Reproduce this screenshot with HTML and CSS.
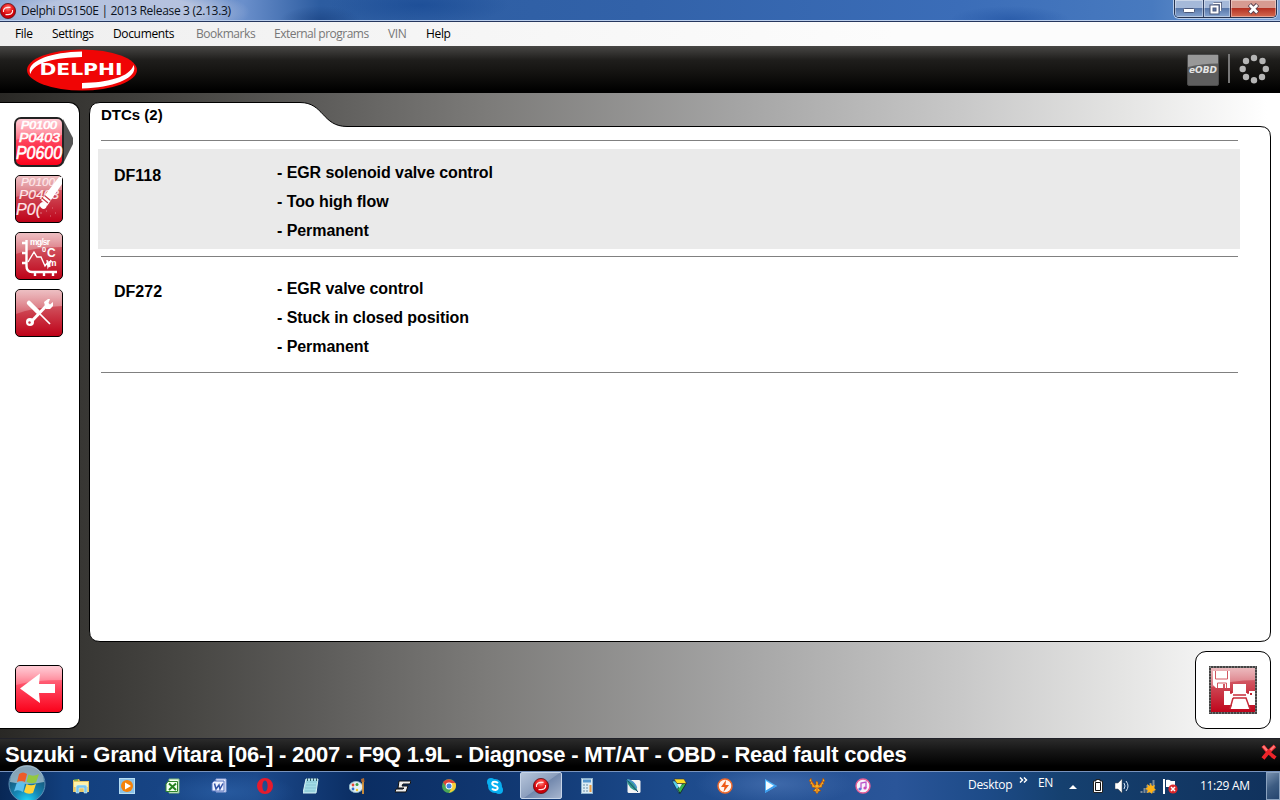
FILE: index.html
```html
<!DOCTYPE html>
<html lang="en">
<head>
<meta charset="utf-8">
<title>Delphi DS150E | 2013 Release 3 (2.13.3)</title>
<link rel="stylesheet" href="styles.css">
</head>
<body>
<svg class="defs" width="0" height="0" aria-hidden="true">
  <defs>
    <linearGradient id="bright" x2="0" y2="1"><stop offset="0" stop-color="#ff9aac"/><stop offset=".5" stop-color="#ff4059"/><stop offset="1" stop-color="#fa0019"/></linearGradient>
    <linearGradient id="dull" x2="0" y2="1"><stop offset="0" stop-color="#dc8087"/><stop offset=".5" stop-color="#cc3e4c"/><stop offset="1" stop-color="#be0017"/></linearGradient>
    <linearGradient id="gloss" x2="0" y2="1"><stop offset="0" stop-color="#fff" stop-opacity=".5"/><stop offset="1" stop-color="#fff" stop-opacity=".2"/></linearGradient>
    <radialGradient id="ball" cx=".5" cy=".3"><stop offset="0" stop-color="#ff8a85"/><stop offset=".5" stop-color="#f02a28"/><stop offset="1" stop-color="#c8000a"/></radialGradient>
    <symbol id="delphi-ball" viewBox="0 0 16 16"><circle cx="8" cy="8" r="7.6" fill="url(#ball)" stroke="#5d1015" stroke-width=".8"/><path d="M3.500 9V7Q4.500 4.500 8 4.400H10.500M12.500 7V9Q11.500 11.500 8 11.600H5.500" fill="none" stroke="#ffe9e8" stroke-width="1.100"/></symbol>
  </defs>
</svg>
<div class="screen">
  <header class="titlebar">
    <svg class="title-icon" viewBox="0 0 16 16"><use href="#delphi-ball"/></svg>
    <span class="title">Delphi DS150E | 2013 Release 3 (2.13.3)</span>
    <div class="window-buttons">
      <span class="wb wb-min"><svg width="12" height="6"><rect x=".5" y=".5" width="11" height="4" rx="1" fill="#fff" stroke="#4b587a"/></svg></span>
      <span class="wb wb-max"><svg width="13" height="13"><path d="M4.500 1.500H11.500V8.500" fill="none" stroke="#4b587a" stroke-width="3"/><path d="M4 1.500H11.500V9" fill="none" stroke="#fff" stroke-width="1.300"/><rect x="2.500" y="4.500" width="6" height="6" fill="#5b75a4" stroke="#4b587a" stroke-width="4"/><rect x="2.500" y="4.500" width="6" height="6" fill="none" stroke="#fff" stroke-width="2"/></svg></span>
      <span class="wb wb-close"><svg width="13" height="12"><path d="M2.500 1.500L10.500 10M10.500 1.500L2.500 10" stroke="#5b4452" stroke-width="4.600"/><path d="M2.800 2L10.200 9.500M10.200 2L2.800 9.500" stroke="#fff" stroke-width="2.700"/></svg></span>
    </div>
  </header>

  <nav class="menubar">
    <span class="m-file">File</span><span class="m-settings">Settings</span><span class="m-docs">Documents</span><span class="m-book off">Bookmarks</span><span class="m-ext off">External programs</span><span class="m-vin off">VIN</span><span>Help</span>
  </nav>

  <div class="brandbar">
    <svg class="logo" width="112" height="42" viewBox="0 0 112 42">
      <ellipse cx="56" cy="21" rx="55" ry="20.500" fill="#f00505"/>
      <path d="M56 2.600V8C30 8.500 8 13 4.500 25C-1 14 21 3.300 56 2.600Z" fill="#fff"/>
      <path d="M56 39.400V34C82 33.500 104 28 107.500 16C113 27 91 38.700 56 39.400Z" fill="#fff"/>
      <text x="13.500" y="25.800" textLength="83" lengthAdjust="spacingAndGlyphs">DELPHI</text>
    </svg>
    <div class="brand-tools">
      <svg width="32" height="32" viewBox="0 0 32 32">
        <rect x=".5" y=".5" width="31" height="31" rx="1.500" fill="#5e5e5e" stroke="#4a4a4a"/>
        <path d="M1 1H31V9.500Q14 9.500 1 13Z" fill="#989898"/>
        <text class="eobd" x="2" y="19" textLength="28" lengthAdjust="spacingAndGlyphs">eOBD</text>
      </svg>
      <span class="divider"></span>
      <svg width="30" height="30" viewBox="0 0 30 30" fill="#b5b5b5"><circle cx="15" cy="4" r="3.200"/><circle cx="23.500" cy="7" r="3.200"/><circle cx="26.800" cy="15" r="3.200"/><circle cx="23" cy="23" r="3.200"/><circle cx="15" cy="26.200" r="3.200"/><circle cx="7" cy="23" r="3.200"/><circle cx="3.700" cy="15" r="3.200"/><circle cx="7" cy="7" r="3.200"/></svg>
    </div>
  </div>

  <main class="workspace">
    <aside class="sidebar">
      <div class="tools">
        <svg width="60" height="50" viewBox="0 0 60 50">
          <path d="M49 2L59 21V27L49 47Z" fill="#555"/>
          <rect x="1" y="1" width="48" height="48" rx="6" fill="url(#bright)" stroke="#222" stroke-width="2"/>
          <path d="M2 7Q2 2 7 2H43Q48 2 48 7V18Q20 16 2 23Z" fill="url(#gloss)"/>
          <g class="codes"><text x="7" y="12" font-size="10" textLength="36" lengthAdjust="spacingAndGlyphs">P0100</text><text x="5" y="25" font-size="13" textLength="41" lengthAdjust="spacingAndGlyphs">P0403</text><text x="2" y="42" font-size="18" textLength="46" lengthAdjust="spacingAndGlyphs">P0600</text></g>
        </svg>
        <svg width="50" height="48" viewBox="0 0 50 48">
          <rect x="1.500" y=".5" width="47" height="47" rx="4.500" fill="url(#dull)" stroke="#000"/>
          <path d="M2 5Q2 1 6 1H44Q48 1 48 5V15Q20 15 2 22Z" fill="url(#gloss)"/>
          <g class="codes thin"><text x="7" y="11" font-size="10" textLength="34" lengthAdjust="spacingAndGlyphs">P0100</text><text x="5" y="24" font-size="13" textLength="40" lengthAdjust="spacingAndGlyphs">P0403</text><text x="2" y="40" font-size="17" textLength="25" lengthAdjust="spacingAndGlyphs">P0(</text></g>
          <path d="M27 25L45 2H48V9L33 31Z" fill="#fff"/>
          <path d="M28 23L34 28M30.500 20.500L36.500 25.500" stroke="#c63543" stroke-width="1.200"/><path d="M26 29Q28 25 33 29Q33 34 29 34Q25 32 26 29Z" fill="#fff"/>
          <path d="M26 38H28M32 36H33M38 33H39M41 38H42M36 41H37M25 42H26" stroke="#de7782"/>
        </svg>
        <svg width="50" height="48" viewBox="0 0 50 48">
          <rect x="1.500" y=".5" width="47" height="47" rx="4.500" fill="url(#dull)" stroke="#000"/>
          <path d="M2 5Q2 1 6 1H44Q48 1 48 5V15Q20 15 2 22Z" fill="url(#gloss)"/>
          <path d="M12.500 8V34Q12.500 40 18 40H43M8 11H13M8 21H13M8 31H13M21 41V44M30 41V44M39 41V44" fill="none" stroke="#fff" stroke-width="2.400"/>
          <path d="M14 30L20 20L23 25H27L31 34L34 30L36 35M33 28L34 35L37 28" fill="none" stroke="#fff" stroke-width="1.400"/>
          <g class="units"><text x="16" y="12.500" font-size="8.500" textLength="20">mg/sr</text><text x="28" y="20" font-size="7.500">0</text><text x="33" y="25" font-size="12">C</text><text x="34.500" y="34" font-size="9">m</text></g>
        </svg>
        <svg width="50" height="48" viewBox="0 0 50 48">
          <rect x="1.500" y=".5" width="47" height="47" rx="4.500" fill="url(#dull)" stroke="#000"/>
          <path d="M2 5Q2 1 6 1H44Q48 1 48 5V17Q20 18 2 25Z" fill="url(#gloss)"/>
          <path d="M15 14L24 23" stroke="#fff" stroke-width="4.500" stroke-linecap="round"/><path d="M23 22L36 35" stroke="#fff" stroke-width="1.700"/><path d="M16 34L34 15" stroke="#fff" stroke-width="3"/>
          <circle cx="16" cy="33" r="4" fill="#fff"/><circle cx="15.500" cy="33.500" r="1.200" fill="#ca3543"/><path d="M31 17L30 13L34 10H36L34.500 14L36 15.500L39 13V17L36 20H32Z" fill="#fff"/>
        </svg>
      </div>
      <svg width="50" height="48" viewBox="0 0 50 48">
        <rect x="1.500" y=".5" width="47" height="47" rx="4.500" fill="url(#bright)" stroke="#000"/>
        <path d="M2 5Q2 1 6 1H44Q48 1 48 5V15Q20 15 2 20Z" fill="url(#gloss)"/>
        <path d="M6 23.500L26 8.500L25 19H41V28H25L26 38Z" fill="#fff"/>
      </svg>
    </aside>
    <section class="content">
      <div class="panel">
        <svg class="panel-shape" width="1182" height="541" viewBox="0 0 1182 541"><path d="M.5 12Q.5 .5 11 .5H211C235 .5 233 24.500 258 24.500H1171Q1181.500 24.500 1181.500 35V530Q1181.500 539.500 1171 539.500H11Q.5 539.500 .5 529Z" fill="#fff" stroke="#000"/></svg>
        <h1>DTCs (2)</h1>
        <div class="faults">
          <article class="fault selected"><b>DF118</b><ul><li>- EGR solenoid valve control</li><li>- Too high flow</li><li>- Permanent</li></ul></article>
          <article class="fault"><b>DF272</b><ul><li>- EGR valve control</li><li>- Stuck in closed position</li><li>- Permanent</li></ul></article>
        </div>
      </div>
      <div class="print-box">
        <svg width="48" height="48" viewBox="0 0 48 48">
          <rect width="48" height="48" fill="url(#dull)"/><path d="M0 0H48V14Q20 14 0 22Z" fill="url(#gloss)"/>
          <rect x="1" y="1" width="46" height="46" fill="none" stroke="#444" stroke-width="2"/><rect x="1" y="1" width="46" height="46" fill="none" stroke="#aaa" stroke-width="1" stroke-dasharray="1 2"/>
          <path d="M4 5H21V22H7L4 19Z" fill="#fff"/><path d="M6.500 5V13H18.500V5M8.500 22V17H17.500V22" fill="none" stroke="#d35661"/><rect x="14" y="18" width="2" height="4" fill="#d35661"/>
          <path d="M24 18H37V27H40V25H46V39H39L41 43H21L23 39H15V25H21V27H24Z" fill="#fff"/><path d="M24 29H37M22 25V28M39 25V28M24 32H37L41 43M24 32L21 43" stroke="#c62c3a" fill="none" stroke-width="1.500"/><rect x="41" y="27" width="2" height="2" fill="#c0222f"/>
        </svg>
      </div>
    </section>
  </main>

  <div class="status"><span>Suzuki - Grand Vitara [06-] - 2007 - F9Q 1.9L - Diagnose - MT/AT - OBD - Read fault codes</span>
    <svg width="16" height="16" viewBox="0 0 16 16"><path d="M2 2Q6 8 14.500 14M14 2Q7 8 2 14.500" fill="none" stroke="#ed2429" stroke-width="3.800"/><path d="M2 2L6 6.500M13.500 2L9.500 6" stroke="#ff7a7a" stroke-width="2.200"/></svg></div>

  <footer class="taskbar">
    <svg class="start" width="38" height="38" viewBox="0 0 38 38">
      <defs><radialGradient id="orb" cx=".5" cy="1" r=".9"><stop offset="0" stop-color="#20dcff"/><stop offset=".4" stop-color="#168ab8"/><stop offset="1" stop-color="#174566"/></radialGradient></defs>
      <circle cx="19" cy="19" r="18" fill="url(#orb)" stroke="#5d8fb5"/><path d="M2 17A17 17 0 0136 17Q19 21 2 17Z" fill="#d1e1e9" opacity=".6"/>
      <path d="M11 9Q15 6 19 9L17 17Q13 15 9 17Z" fill="#ee5b29"/><path d="M20.500 9.500Q25 12 31 9L28 17.500Q23 19 18.500 17Z" fill="#94c841"/><path d="M8.500 18.500Q13 16 17 18.500L15 27Q10 24 6 26.500Z" fill="#5fc0ee"/><path d="M18.500 19Q23 21.500 28 19L25 28Q20 30 16 27Z" fill="#ffd33b"/>
    </svg>
    <div class="apps">
      <span><svg viewBox="0 0 16 16"><path d="M0 2L6 1L7 3H16V14H0Z" fill="#e7c765"/><path d="M1 4H15V9H1Z" fill="#fff2a6"/><path d="M3 15V9Q3 7 5 7H12Q14 7 14 9V15H11V10H6V15Z" fill="#7bc8ed" stroke="#e1f5ff" stroke-width=".5"/><path d="M1 2H5" stroke="#3ca745"/></svg></span>
      <span><svg viewBox="0 0 16 16"><rect x=".5" y=".5" width="15" height="15" fill="#8bc2e8" stroke="#b8def4"/><circle cx="8" cy="8" r="6" fill="#f58209"/><path d="M6 4.500L12 8L6 11.500Z" fill="#fff"/></svg></span>
      <span><svg viewBox="0 0 16 16"><path d="M4 1H14V15H4Z" fill="#f7fff5" stroke="#80bd7b"/><path d="M3 3.500H12.500V13.500H1V6Z" fill="#f3fff0" stroke="#31872d"/><path d="M4 5.500L11 12M11 5.500L4 12" stroke="#258020" stroke-width="2"/></svg></span>
      <span><svg viewBox="0 0 16 16"><path d="M5 1H15V14H5Z" fill="#eef3ff" stroke="#9aaade"/><path d="M3 3H13V13H1V5Z" fill="#eff3ff" stroke="#5370bd"/><path d="M3.500 5.500L5 11L8 7L9 11L12 5.500" fill="none" stroke="#3455a8" stroke-width="1.500"/></svg></span>
      <span><svg viewBox="0 0 16 16"><path fill-rule="evenodd" d="M8 0A8 8 0 108 16A8 8 0 008 0ZM8 2.500C11.500 2.500 11.500 13.500 8 13.500S4.500 2.500 8 2.500Z" fill="#e61b2d"/></svg></span>
      <span><svg viewBox="0 0 16 16"><path d="M3 1H15L13 15H0Z" fill="#a2dbe5" stroke="#d3eff2"/><path d="M3 4H14M3 7H13M2 10H13M2 13H12" stroke="#7fbccb" stroke-width=".7"/><path d="M4.500 0V3M7.500 0V3M10.500 0V3M13.500 0V3" stroke="#325b68"/></svg></span>
      <span><svg viewBox="0 0 16 16"><ellipse cx="7" cy="9" rx="6.800" ry="5.500" fill="#e3f1f5" stroke="#8eb6c8"/><circle cx="4" cy="7" r="1.400" fill="#e74637"/><circle cx="8" cy="6.500" r="1.500" fill="#3f9b43"/><circle cx="4" cy="11" r="1.400" fill="#326fcd"/><circle cx="8" cy="12" r="1.200" fill="#f6c828"/><path d="M14 3V16" stroke="#e79a35" stroke-width="1.700"/><path d="M12 1L15 0L15.500 4H12.500Z" fill="#b06a30"/></svg></span>
      <span><svg viewBox="0 0 16 16"><path d="M4 3H16L15 6H8L7 8H13L11 14H0L1 11H8L9 10H3Z" fill="#eee" stroke="#111"/></svg></span>
      <span><svg viewBox="0 0 16 16"><circle cx="8" cy="8" r="7" fill="#4aa657"/><path d="M2 4Q8-2 14.500 5H8L6 10Z" fill="#df4539"/><path d="M8 5H14.500Q17 12 8 15L11 9Z" fill="#f9cf36"/><circle cx="8" cy="8" r="3.400" fill="#fff"/><circle cx="8" cy="8" r="2.500" fill="#4285e4"/></svg></span>
      <span><svg viewBox="0 0 16 16"><circle cx="8" cy="8" r="7" fill="#08aff0"/><circle cx="4" cy="4" r="4" fill="#08aff0"/><circle cx="12" cy="12" r="4" fill="#08aff0"/><path d="M11 5Q9 3 6 4Q4 6 7 7.500L10 8.500Q12 11 8.500 12Q6 12 5 10.500" fill="none" stroke="#fff" stroke-width="2"/></svg></span>
      <span class="active"><svg viewBox="0 0 16 16"><use href="#delphi-ball"/></svg></span>
      <span><svg viewBox="0 0 16 16"><rect x="2.500" y=".5" width="11" height="15" fill="#dcecf5" stroke="#8db1cc"/><path d="M4 3H12" stroke="#5899cf" stroke-width="3"/><path d="M4 7H6M7 7H9M4 10H6M7 10H9M4 13H6M7 13H9" stroke="#6c91aa"/><path d="M11.500 7V14" stroke="#ea9a40" stroke-width="2"/></svg></span>
      <span><svg viewBox="0 0 16 16"><rect x="2.500" y="2" width="13" height="13" rx="1.500" fill="#f4f4f4"/><path d="M1 1Q10 1 12.500 13Q4 12 1 1Z" fill="#319c8b"/><path d="M1 1L13 14" stroke="#174371"/><path d="M2.500 1.800Q9.500 3.500 11.500 10" stroke="#4b94d0" fill="none" stroke-width="1.500"/></svg></span>
      <span><svg viewBox="0 0 16 16"><path d="M1 3L8 15.500L9.500 10.500L5 3Z" fill="#58cce9" stroke="#123" stroke-width=".6"/><path d="M15.500 5L9 15.500L6.500 11L11 6Z" fill="#37b54e" stroke="#111" stroke-width=".7"/><path d="M3 1H13L15.500 5.500H6Z" fill="#ffdf28" stroke="#333" stroke-width=".6"/><path d="M6 6H11L8.500 10Z" fill="#e8f4f4"/></svg></span>
      <span><svg viewBox="0 0 16 16"><circle cx="8" cy="8" r="7" fill="#fff3ed" stroke="#ed682c" stroke-width="1.500"/><path d="M9 2L4 9H7.500L6.500 14L12 7H8.500Z" fill="#ee5a17"/></svg></span>
      <span><svg viewBox="0 0 16 16"><path d="M2 1L14 8L2 15Z" fill="#51b7fa"/><path d="M3 3L11 8L3 13Z" fill="#f4fcff"/><path d="M2 15L14 8L12 7L2 13Z" fill="#3c9bec"/></svg></span>
      <span><svg viewBox="0 0 16 16"><path d="M2 0L0 3L2 4L1 6L3 6.500L3 9L7 10L4 13L6 13L8 16L10 13L12 13L9 10L13 9L13 6.500L15 6L14 4L16 3L14 0L13 4L10 7H9V4L7 3L7 7H6L3 4Z" fill="#f4b324" stroke="#a3460b" stroke-width=".6"/><path d="M2.500 3L6 8.500M13.500 3L10 8.500M8 9V14" fill="none" stroke="#d4540e"/></svg></span>
      <span><svg viewBox="0 0 16 16"><circle cx="8" cy="8" r="7" fill="#f7f4fb" stroke="#e85f96" stroke-width="1.400"/><path d="M6 11V5L11 4V10" fill="none" stroke="#bb56c9" stroke-width="1.300"/><circle cx="5" cy="11" r="1.600" fill="#6378df"/><circle cx="10" cy="10" r="1.600" fill="#ca4bbb"/></svg></span>
    </div>
    <div class="tray">
      <span class="desktop">Desktop</span><svg width="9" height="6" viewBox="0 0 9 6" class="chevron"><path d="M1 .5L3.500 3L1 5.500M5 .5L7.500 3L5 5.500" fill="none" stroke="#fff" stroke-width="1.500"/></svg><span class="lang">EN</span>
      <svg width="8" height="5" class="caret"><path d="M0 4L4 0L8 4Z" fill="#fff"/></svg>
      <svg width="10" height="14" viewBox="0 0 10 14"><path d="M3 .5H7V2H9.500V13.500H.5V2H3Z" fill="#fff" stroke="#222"/><path d="M2.500 3.500H7.500V11.500H2.500Z" fill="#fff" stroke="#111"/></svg>
      <svg width="14" height="14" viewBox="0 0 14 14"><path d="M0 4H3L7 0V14L3 10H0Z" fill="#fff" stroke="#555" stroke-width=".5"/><path d="M9 4Q11 7 9 10M11 2Q15 7 11 12" fill="none" stroke="#d9e7f5"/></svg>
      <svg width="16" height="15" viewBox="0 0 16 15"><path d="M1.500 12V14M4.500 9V14M7.500 6V14M10.500 4V14M13.500 1V14" stroke="#7d8c9b" stroke-width="2"/><path d="M10.500 4L12 7L15 6L14 9L16 11L13 12L12 15L10 13L7 14L8 11L5 10L8 8L7 5L10 7Z" fill="#ffb216"/></svg>
      <svg width="15" height="15" viewBox="0 0 15 15"><path d="M1 0V15" stroke="#fff" stroke-width="2"/><path d="M3 1Q6 0 8 2H12V8H3Z" fill="#fff"/><circle cx="10" cy="10" r="4.600" fill="#db282c"/><path d="M8 8L12 12M12 8L8 12" stroke="#fff" stroke-width="1.500"/></svg>
      <span class="clock">11:29 AM</span>
      <span class="peek"></span>
    </div>
  </footer>
</div>
</body>
</html>
```
FILE: styles.css
```css
* { box-sizing: border-box; }
body { margin: 0; font-family: "Liberation Sans", Arial, sans-serif; background: #000; }
svg { display: block; flex: none; }
.defs { position: absolute; }
.screen { width: 1280px; height: 800px; overflow: hidden; display: flex; flex-direction: column; }

.titlebar {
  flex: none; height: 22px; display: flex; align-items: flex-start;
  font: 12px/21px "Open Sans", "Noto Sans", sans-serif; color: #0b1220;
  border-bottom: 1px solid #26375e; box-shadow: inset 0 -1px #b9cdeb;
  background:
    radial-gradient(ellipse 130px 28px at 120px 12px, rgba(188,199,225,.9) 60%, transparent 100%),
    radial-gradient(ellipse 40px 14px at 320px 20px, rgba(20,58,120,.5), transparent),
    radial-gradient(ellipse 90px 20px at 420px 5px, rgba(20,70,145,.6), transparent),
    radial-gradient(ellipse 60px 14px at 1010px 20px, rgba(30,80,160,.6), transparent),
    linear-gradient(90deg, #8aa6d2, #6a8fcb 19%, #2c5ca0 25%, #3262a9 50%, #3b6db8 75%, #487abf 90%, #7ca2d6);
}
.title-icon { width: 16px; height: 16px; margin: 3px 5px 0 0; }
.title { letter-spacing: -.32px; white-space: nowrap; }
.window-buttons { margin: 0 3px 0 auto; width: 103px; height: 18px; display: flex; border: 1px solid #26334f; border-top: 0; border-radius: 0 0 5px 5px; box-shadow: 0 0 0 1px #b9cdea; overflow: hidden; }
.wb { display: flex; align-items: center; justify-content: center; background: linear-gradient(#a5b9d9 45%, #5978aa 50%, #86a4cf); box-shadow: inset 0 0 0 1px rgba(255,255,255,.4); }
.wb-min { width: 28px; padding-top: 4px; }
.wb-max { width: 27px; border-left: 1px solid #324265; padding-right: 3px; }
.wb-close { flex: 1; border-left: 1px solid #4a2430; background: linear-gradient(#d79b91 45%, #b53324 50%, #d46b51); }

.menubar { flex: none; height: 24px; display: flex; padding-left: 15px; font: 12px/23px "Open Sans", "Noto Sans", sans-serif; letter-spacing: -.35px; color: #000; background: linear-gradient(90deg, #efefef, #fcfcfc 70%); white-space: nowrap; }
.m-file { width: 37px; } .m-settings { width: 61px; } .m-docs { width: 83px; } .m-book { width: 78px; } .m-ext { width: 114px; } .m-vin { width: 38px; }
.m-book { letter-spacing: -.45px; }
.m-ext { letter-spacing: -.52px; }
.off { color: #777; }

.brandbar { flex: none; height: 47px; display: flex; justify-content: space-between; padding: 3px 11px 0 26px; background: linear-gradient(#484745, #1f1e1c 30%, #12110f 60%, #000 95%); }
.logo text { font: bold 16px "DejaVu Sans", sans-serif; fill: #fff; }
.brand-tools { display: flex; gap: 9px; padding-top: 5px; }
.eobd { font: italic bold 9.5px "DejaVu Sans", sans-serif; fill: #e4e4e4; }
.divider { width: 2px; height: 29px; background: #777; }

.workspace { flex: none; height: 645px; display: flex; gap: 10px; padding: 9px 9px 9px 0; background: linear-gradient(90deg, #292825, #373633 6%, #484744 15%, #5d5c5a 25%, #7c7b79 38%, #a5a5a5 58%, #c8c8c8 75%, #e5e5e4 88%, #fff 99%); }
.sidebar { width: 80px; height: 627px; display: flex; flex-direction: column; justify-content: space-between; background: #fff; border: 1px solid #000; border-left: 0; border-radius: 0 11px 11px 0; padding: 14px 0 15px 14px; margin-right: -1px; }
.tools { display: flex; flex-direction: column; gap: 9px; }
.tools svg:first-child { margin-bottom: -1px; }
.codes { font-family: "Liberation Sans", Arial, sans-serif; font-style: italic; fill: #fff; stroke: #fff; stroke-width: .6px; }
.thin { fill: #ffe7ea; stroke: #ffe7ea; stroke-width: .2px; }
.units { font-family: "Liberation Sans", Arial, sans-serif; font-weight: bold; fill: #fff; }

.content { width: 1182px; display: flex; flex-direction: column; gap: 9px; align-items: flex-end; }
.panel { position: relative; width: 1182px; height: 540px; flex: none; }
.panel-shape { position: absolute; left: 0; top: 0; z-index: 0; }
.panel h1 { position: relative; margin: 0; padding: 4px 0 0 12px; height: 38px; font-size: 15px; line-height: 18px; font-weight: bold; }
.faults { position: relative; margin: 0 33px 0 12px; border-top: 1px solid #808080; }
.fault { height: 116px; border-bottom: 1px solid #808080; padding: 17px 0 0 13px; display: flex; font-size: 16px; line-height: 29px; font-weight: bold; }
.fault b { width: 163px; padding-top: 3px; }
.fault ul { margin: 0; padding: 0; list-style: none; letter-spacing: -.07px; }
.selected { margin: 0 -2px 0 -3px; padding-left: 16px; border-bottom: 0; background: linear-gradient(#eaeaea, #eaeaea) 0 8px / 100% 100px no-repeat, linear-gradient(#808080, #808080) 3px 115px / 1137px 1px no-repeat; }
.print-box { width: 76px; height: 78px; display: flex; align-items: center; justify-content: center; background: #fff; border: 1px solid #000; border-radius: 11px; }

.status { flex: none; height: 33px; display: flex; justify-content: space-between; padding: 0 3px 0 5px; color: #fff; font-size: 22px; line-height: 31px; letter-spacing: -.24px; font-weight: bold; background: linear-gradient(#2b2b2b, #171717 35%, #000 85%); border-top: 1px solid #202129; white-space: nowrap; }
.status svg { margin-top: 5px; }

.taskbar { flex: none; height: 29px; display: flex; position: relative; border-top: 1px solid #7893bd; background:
  radial-gradient(ellipse 70px 20px at 225px 20px, rgba(44,97,167,.7), transparent),
  radial-gradient(ellipse 80px 22px at 775px 12px, rgba(74,116,180,.7), transparent),
  linear-gradient(90deg, #082755, #123f7d 5%, #1c498b 20%, #0a2d62 28%, #123a75 42%, #1c4a8b 52%, #2a5599 70%, #1d4b88 77%, #15406f 83%, #10315c); }
.start { position: absolute; left: 8px; top: -7px; }
.apps { display: flex; margin-left: 58px; }
.apps > span { width: 46px; height: 27px; display: flex; align-items: center; justify-content: center; }
.apps svg { width: 16px; height: 16px; }
.apps .active { width: 42px; margin: 0 2px; border: 1px solid #c6d4e8; border-radius: 2px; background: linear-gradient(145deg, #b6c5da, #8c9fbe 50%, #7288ad 52%, #a6b5ce); }
.tray { display: grid; grid-template-columns: 51px 19px 31px 24px 22px 25px 23px 37px 66px 14px; align-items: center; margin-left: auto; color: #fff; font: 12px/26px "Open Sans", "Noto Sans", sans-serif; letter-spacing: -.3px; white-space: nowrap; }
.desktop { margin-top: -2px; }
.chevron { margin: -12px 0 0; }
.lang { margin-top: -6px; }
.caret { margin: 3px 0 0; }
.peek { height: 28px; border: 1px solid #8aa2bf; background: linear-gradient(145deg, #7891b0, #3d5c82 50%, #24456f); }
```
